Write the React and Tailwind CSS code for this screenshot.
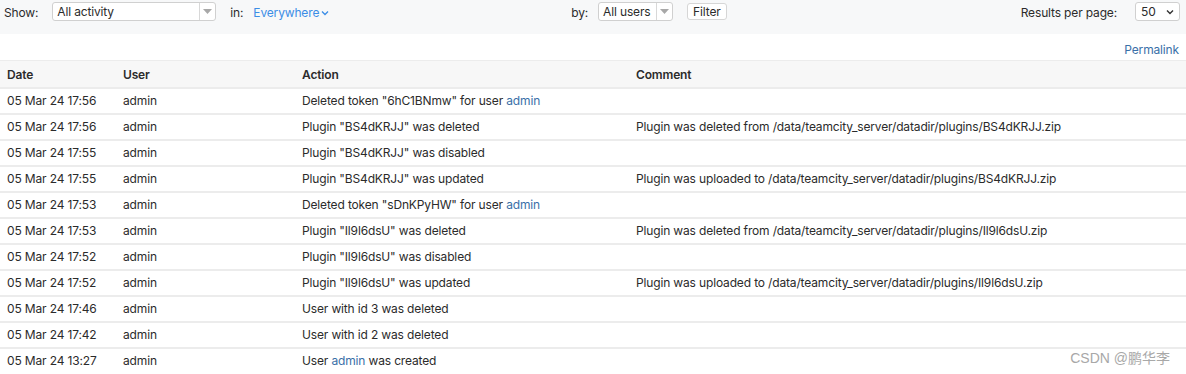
import React from 'react';

const rows = [
  { date: '05 Mar 24 17:56', action: ['Deleted token "6hC1BNmw" for user ', 'admin', ''], comment: '' },
  { date: '05 Mar 24 17:56', action: ['Plugin "BS4dKRJJ" was deleted'], comment: 'Plugin was deleted from /data/teamcity_server/datadir/plugins/BS4dKRJJ.zip' },
  { date: '05 Mar 24 17:55', action: ['Plugin "BS4dKRJJ" was disabled'], comment: '' },
  { date: '05 Mar 24 17:55', action: ['Plugin "BS4dKRJJ" was updated'], comment: 'Plugin was uploaded to /data/teamcity_server/datadir/plugins/BS4dKRJJ.zip' },
  { date: '05 Mar 24 17:53', action: ['Deleted token "sDnKPyHW" for user ', 'admin', ''], comment: '' },
  { date: '05 Mar 24 17:53', action: ['Plugin "Il9l6dsU" was deleted'], comment: 'Plugin was deleted from /data/teamcity_server/datadir/plugins/Il9l6dsU.zip' },
  { date: '05 Mar 24 17:52', action: ['Plugin "Il9l6dsU" was disabled'], comment: '' },
  { date: '05 Mar 24 17:52', action: ['Plugin "Il9l6dsU" was updated'], comment: 'Plugin was uploaded to /data/teamcity_server/datadir/plugins/Il9l6dsU.zip' },
  { date: '05 Mar 24 17:46', action: ['User with id 3 was deleted'], comment: '' },
  { date: '05 Mar 24 17:42', action: ['User with id 2 was deleted'], comment: '' },
  { date: '05 Mar 24 13:27', action: ['User ', 'admin', ' was created'], comment: '' },
];

const Caret = () => (
  <svg width="9" height="6" viewBox="0 0 9 6"><path d="M0 0h9L4.5 5z" fill="#a8a8a8" /></svg>
);

const Select = ({ label, width }) => (
  <div className={`flex h-[19px] items-stretch rounded-[3px] border border-[#d0d0d0] bg-white ${width}`}>
    <span className="flex-1 pl-[4px] leading-[17px]">{label}</span>
    <span className="flex w-[16px] items-center justify-center border-l border-[#d8d8d8]"><Caret /></span>
  </div>
);

const App = () => {
  return (
    <div className="relative h-[374px] w-[1186px] overflow-hidden bg-white text-[12px] tracking-[-0.15px] text-[#2b2b2b]" style={{ fontFamily: 'Inter, "Liberation Sans", sans-serif' }}>
      <div className="flex h-[34px] items-start bg-[#f7f8f9] pt-[2px]">
        <span className="ml-[4px] mt-[2px]">Show:</span>
        <div className="ml-[14px]"><Select label="All activity" width="w-[164px]" /></div>
        <span className="ml-[14px] mt-[2px]">in:</span>
        <span className="ml-[10px] mt-[2px] flex items-center gap-[2px] text-[#3b8de6]">
          Everywhere
          <svg width="8" height="6" viewBox="0 0 8 6"><path d="M1 1.5l3 3 3-3" fill="none" stroke="#3b8de6" strokeWidth="1.3" /></svg>
        </span>
        <span className="ml-[242px] mt-[2px]">by:</span>
        <div className="ml-[10px]"><Select label="All users" width="w-[75px]" /></div>
        <button className="ml-[14px] mt-[1px] h-[17px] rounded-[3px] border border-[#d6d6d6] bg-white px-[5px] leading-[15px]">Filter</button>
        <span className="ml-auto mt-[2px]">Results per page:</span>
        <div className="ml-[18px] mr-[6px] flex h-[19px] w-[45px] items-center justify-between rounded-[3px] border border-[#d0d0d0] bg-white pl-[5px] pr-[5px]">
          <span>50</span>
          <svg width="8" height="6" viewBox="0 0 8 6"><path d="M1 1.5l3 3 3-3" fill="none" stroke="#333" strokeWidth="1.4" /></svg>
        </div>
      </div>

      <div className="flex h-[26px] items-end justify-end pb-[1px] pr-[7px]">
        <a className="text-[#3a6fa8]">Permalink</a>
      </div>

      <div className="grid h-[27px] grid-cols-[116px_179px_334px_1fr] items-center border-t border-[#ececec] bg-[#f7f7f7] pl-[7px] pt-[1px] font-semibold">
        <span>Date</span>
        <span>User</span>
        <span>Action</span>
        <span>Comment</span>
      </div>
      {rows.map((r, i) => (
        <div key={i} className="grid h-[26px] grid-cols-[116px_179px_334px_1fr] items-center border-t-2 border-[#ececec] pl-[7px]">
          <span>{r.date}</span>
          <span>admin</span>
          <span>
            {r.action[0]}
            {r.action[1] && <a className="text-[#3a6fa8]">{r.action[1]}</a>}
            {r.action[2]}
          </span>
          <span>{r.comment}</span>
        </div>
      ))}

      <div className="absolute bottom-[5px] right-[16px] text-[14px] tracking-normal text-[#a8a8a8]" style={{ fontFamily: '"Liberation Sans", "Noto Sans CJK SC", sans-serif' }}>
        CSDN @鹏华李
      </div>
    </div>
  );
};

export default App;
